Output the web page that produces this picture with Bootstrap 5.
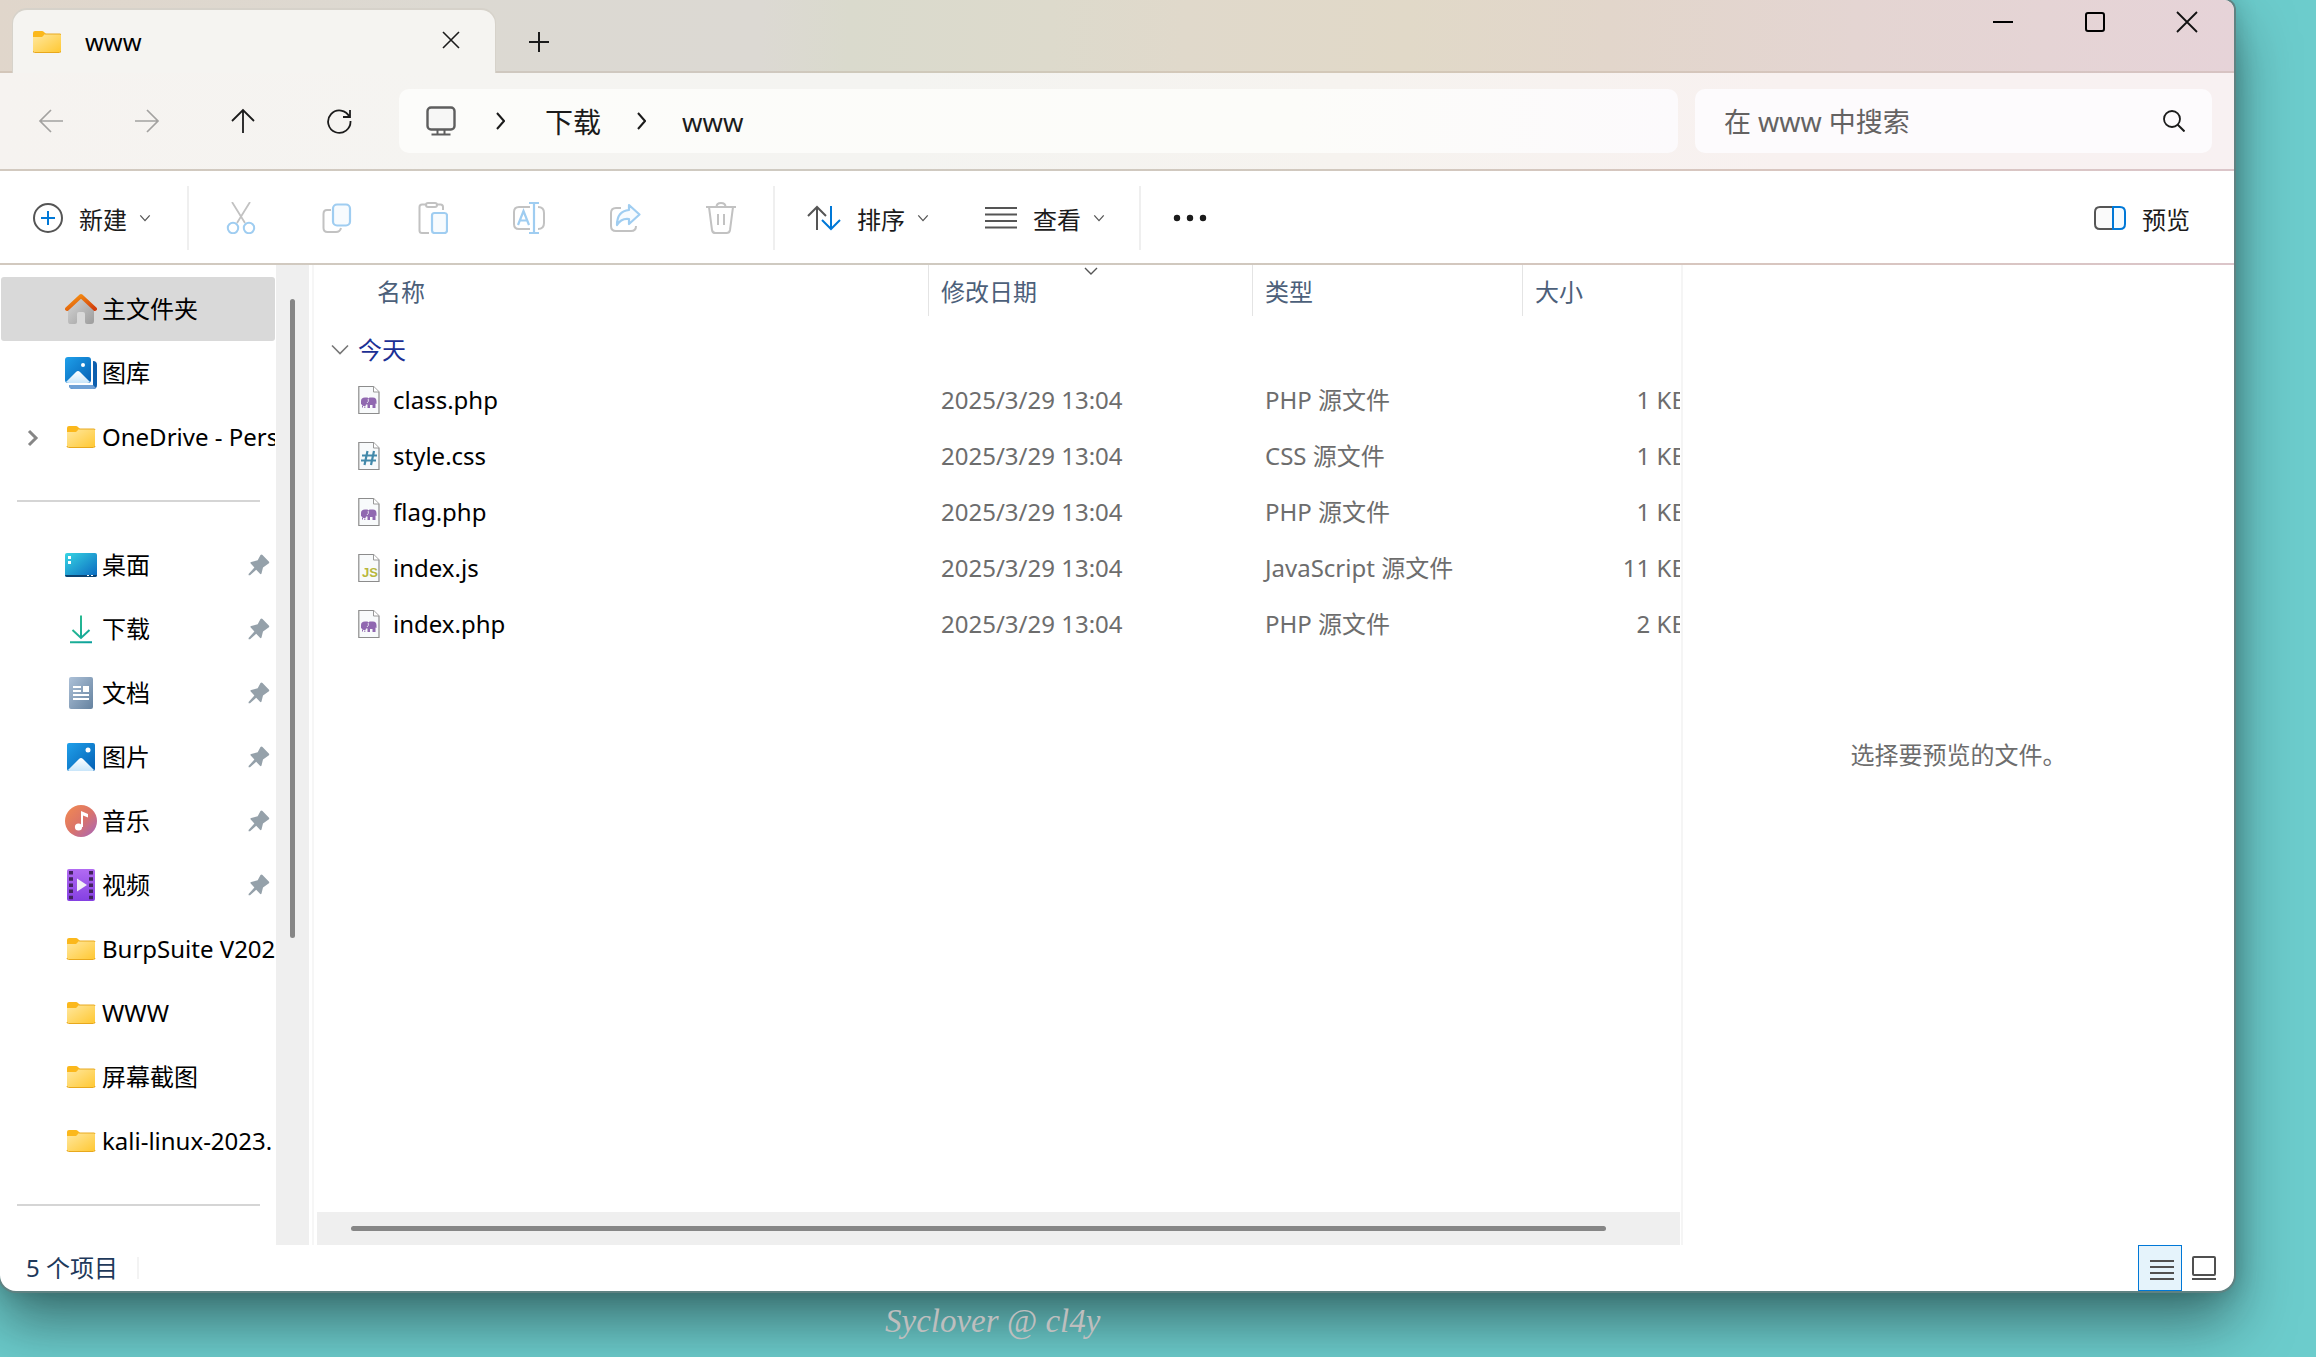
<!DOCTYPE html>
<html lang="zh-CN">
<head>
<meta charset="utf-8">
<meta name="viewport" content="width=device-width, initial-scale=1">
<title>www</title>
<link rel="stylesheet" href="https://cdn.jsdelivr.net/npm/bootstrap@5.3.0/dist/css/bootstrap.min.css">
<style>
  :root { --ink: #1b1b1b; --edge: linear-gradient(90deg, #d2c9bf 0%, #cfcac1 35%, #d1c8be 60%, #d8c6bf 78%, #dbc5c9 100%); }
  body { font-family: "Noto Sans", "Noto Sans CJK SC", sans-serif; font-size: 24px; line-height: 32px; color: #000; background: #6ccccc; }
  svg { display: block; flex: none; fill: none; }
  button, .side-link { background: none; border: 0; padding: 0; color: inherit; text-decoration: none; }
  .desktop { min-height: 100vh; overflow: hidden; }
  .explorer { margin-right: 82px; background: #fff; border-radius: 0 10px 16px 16px; box-shadow: 0 0 0 2px #5f8282, 0 30px 58px rgba(10, 20, 20, .5), 0 0 22px rgba(10, 30, 30, .25); }
  .title-strip { height: 73px; border-radius: 0 10px 0 0; background: linear-gradient(92deg, #e0d6cb 0%, #dcd9d2 20%, #dcd9d3 34%, #dadacd 38%, #dddacc 47%, #e0d9cb 53%, #e1d9c8 63%, #e2d6cb 72%, #e4d5d2 83%, #e6d3d8 100%); box-shadow: inset 0 -2px rgba(165, 140, 125, .22); }
  .tab-active { width: 482px; height: 63px; margin: 10px 0 0 13px; padding: 0 34px 0 20px; background: #f5f4f1; border-radius: 14px 14px 0 0; box-shadow: 0 -1px 0 1px #d6d2ca; clip-path: inset(-2px -2px 0 -2px); }
  .tab-active button { padding-bottom: 4px; }
  .tab-add { width: 88px; height: 73px; padding-top: 10px; }
  .caption-set { margin-right: 1px; }
  .caption-btn { width: 92px; height: 44px; }
  .nav-strip { height: 96px; padding: 0 22px 0 3px; background: linear-gradient(90deg, #f6f3f0 0%, #f5f4f1 20%, #f4f4f1 40%, #f6f3ef 60%, #f8f1f0 80%, #f8f1f2 100%); }
  .edge-line { height: 2px; background: var(--edge); }
  .tool-btn { width: 96px; height: 64px; }
  .address-box, .search-box { height: 64px; border-radius: 10px; }
  .address-box { background: linear-gradient(90deg, #fcfcfa 0%, #fcfcf9 70%, #fcfafc 100%); margin-left: 12px; padding-left: 27px; }
  .crumb { font-size: 28px; padding-top: 2px; color: var(--ink); text-decoration: none; }
  .crumb-end { font-size: 26px; }
  .crumb-sep { margin: 0 36px; }
  .crumb-root { margin: 0 40px; }
  .search-box { width: 517px; margin-left: 17px; padding: 0 27px 0 29px; background: #fdfbfd; }
  .search-box input { border: 0; outline: 0; background: none; font-size: 27px; color: #5f5e5e; padding: 2px 0 0; }
  .search-box input::placeholder { color: #646262; opacity: 1; }
  .command-bar { height: 92px; padding: 2px 44px 0 33px; color: var(--ink); }
  .bar-label { margin: 0 12px 0 16px; padding-top: 4px; }
  .bar-rule { width: 2px; height: 64px; background: #efefef; }
  .bar-rule-first { margin: 0 4px 0 36px; }
  .bar-rule-last { margin: 0 32px 0 34px; }
  .side-pane { width: 276px; padding-top: 12px; }
  .side-item { height: 64px; margin: 0 1px; padding: 0 5px 0 64px; overflow: hidden; white-space: nowrap; position: relative; }
  .side-item.chosen { background: #d9d9d9; border-radius: 3px; }
  .side-link { padding-left: 5px; }
  .side-expander { position: absolute; left: 26px; top: 24px; }
  .side-rule { height: 64px; padding: 31px 16px 0 17px; }
  .side-rule hr { margin: 0; border-top: 2px solid #d5d5d5; opacity: 1; }
  .v-track { width: 33px; background: #efefef; padding: 34px 14px 0; }
  .v-thumb { width: 5px; height: 67.5%; background: #868686; border-radius: 3px; }
  .h-track { height: 33px; background: #efefef; padding: 14px 74px 0 34px; }
  .h-thumb { height: 5px; background: #868686; border-radius: 3px; }
  .pane-gap { width: 8px; border-left: 3px solid #fff; box-shadow: inset 2px 0 #f6f6f6; }
  .list-pane { min-width: 0; overflow: hidden; }
  .file-table { width: calc(100% + 19px); table-layout: fixed; border-collapse: separate; border-spacing: 0; white-space: nowrap; }
  .col-date { width: 324px; }
  .col-kind { width: 270px; }
  .col-size { width: 176px; }
  .file-table thead th { height: 51px; padding: 3px 12px 0; font-weight: 400; color: #4c607a; border-right: 1px solid #e4e4e4; position: relative; }
  .file-table thead th:first-child { padding-left: 60px; }
  .file-table thead th:last-child { border-right: 0; }
  .sort-mark { position: absolute; left: 155px; top: 2px; }
  .group-row th { height: 56px; padding: 12px 0 0 14px; font-weight: 400; color: #1c3094; }
  .group-row svg { margin-right: 9px; }
  .file-row td { height: 56px; padding: 0 12px; color: #6d6d6d; }
  .file-row td:first-child { color: #000; padding-left: 41px; }
  .file-row td:last-child { text-align: right; }
  .file-name { padding-left: 13px; }
  .preview-pane { width: 553px; margin-left: 1px; border-left: 2px solid #f5f5f5; color: #6d6d6d; }
  .status-strip { height: 46px; padding: 0 8px 0 26px; color: #1e395b; }
  .status-rule { width: 2px; height: 22px; margin-left: 19px; background: #f3f3f3; }
  .view-btn { width: 44px; height: 46px; }
  .view-btn.pressed { background: #e5f3fb; border: 1px solid #0078d7; padding: 4px 0 0 4px; }
  .watermark { height: 66px; padding: 12px 0 0 885px; font: italic 33px/36px "Liberation Serif", serif; color: #bebebe; position: relative; }
</style>
<script src="https://cdn.jsdelivr.net/npm/bootstrap@5.3.0/dist/js/bootstrap.bundle.min.js"></script>
</head>
<body>
<svg width="0" height="0" class="position-absolute" aria-hidden="true">
  <defs>
    <linearGradient id="gFolder" x1="0" y1="0" x2="1" y2="1"><stop offset="0" stop-color="#ffe8a0"/><stop offset="1" stop-color="#ffc833"/></linearGradient>
    <linearGradient id="gRoof" x1="0" y1="0" x2="1" y2="1"><stop offset="0" stop-color="#f99a12"/><stop offset="1" stop-color="#d13c0c"/></linearGradient>
    <linearGradient id="gWall" x1="0" y1="0" x2="1" y2="1"><stop offset="0" stop-color="#d8d8d8"/><stop offset="1" stop-color="#9c9c9c"/></linearGradient>
    <linearGradient id="gBlue" x1="0" y1="0" x2="1" y2="1"><stop offset="0" stop-color="#1fa0ea"/><stop offset="1" stop-color="#0560b4"/></linearGradient>
    <linearGradient id="gSnow" x1="0" y1="0" x2="0" y2="1"><stop offset="0" stop-color="#fff"/><stop offset="1" stop-color="#c9e6fa"/></linearGradient>
    <linearGradient id="gDesk" x1="0" y1="0" x2="1" y2="1"><stop offset="0" stop-color="#37d5e3"/><stop offset="1" stop-color="#0a68c0"/></linearGradient>
    <linearGradient id="gDown" x1="0" y1="0" x2="1" y2="1"><stop offset="0" stop-color="#33c38c"/><stop offset="1" stop-color="#0a9f9d"/></linearGradient>
    <linearGradient id="gDoc" x1="0" y1="0" x2="1" y2="1"><stop offset="0" stop-color="#adc1d8"/><stop offset="1" stop-color="#65829f"/></linearGradient>
    <linearGradient id="gMusic" x1="0" y1="0" x2="1" y2="1"><stop offset="0" stop-color="#f38b50"/><stop offset=".5" stop-color="#db7468"/><stop offset="1" stop-color="#a665bd"/></linearGradient>
    <linearGradient id="gVideo" x1="0" y1="0" x2="0" y2="1"><stop offset="0" stop-color="#b26bf2"/><stop offset="1" stop-color="#8440e2"/></linearGradient>
    <symbol id="folder" viewBox="0 0 32 32"><path d="M2 7a2 2 0 0 1 2-2h7q1 0 2 1l2 2v6H2z" fill="#fbb81c"/><path d="M2 11h9l3-3h16v18H2z" fill="url(#gFolder)"/><path d="M14 8h15q1 0 1 1" stroke="#e8aa22"/><path d="M2 25q0 1.500 1.500 1.500h25q1.500 0 1.500-1.500" stroke="#e8a81c"/></symbol>
    <symbol id="home" viewBox="0 0 32 32"><path d="M3 16 16 4l13 12v12q0 3-3 3h-4q-2 0-2-2v-8q0-2-2-2h-4q-2 0-2 2v8q0 2-2 2H5q-2 0-2-3z" fill="url(#gWall)"/><path d="M2 16 16 3l14 13" stroke="url(#gRoof)" stroke-width="4" stroke-linecap="round" stroke-linejoin="round"/></symbol>
    <symbol id="gallery" viewBox="0 0 32 32"><path d="M28 4q4 0 4 4v20q0 4-4 4H8q-4 0-4-4h24z" fill="#0d5fae"/><path d="M4 28h24l3 3q-1 1-3 1H8q-4 0-4-4z" fill="#6fa1d6"/><rect x="-1" y="-1" width="29" height="29" fill="#fff"/><rect width="26" height="26" rx="3" fill="url(#gBlue)"/><path d="M1 25 11 15q2-2 4 0l10 10q-1 1-3 1H4q-2 0-3-1z" fill="url(#gSnow)"/><circle cx="18" cy="8" r="2" fill="#fff"/></symbol>
    <symbol id="desktop" viewBox="0 0 32 32"><rect y="4" width="32" height="24" rx="2" fill="url(#gDesk)"/><path d="M0 26h32q0 2-2 2H2q-2 0-2-2z" fill="#0b4371"/><path d="M3 7h3v3H3zm0 5h3v3H3zM22 26h2v1h-2zm4 0h2v1h-2z" fill="#fff"/></symbol>
    <symbol id="download" viewBox="0 0 32 32"><path d="M16 2.500v22M7.500 17l8.500 8 8.500-8M5 29.200h22" stroke="url(#gDown)" stroke-width="2"/></symbol>
    <symbol id="document" viewBox="0 0 32 32"><rect x="4" width="24" height="32" rx="2" fill="url(#gDoc)"/><path d="M8 10h8M8 14h8M8 18h16M8 22h16" stroke="#fff" stroke-width="2"/><path d="M18 9h6v6h-6z" fill="#fff"/></symbol>
    <symbol id="picture" viewBox="0 0 32 32"><rect x="2" y="2" width="28" height="28" rx="2" fill="url(#gBlue)"/><path d="M3 29 14 18q2-2 4 0l11 11-1 1H4z" fill="url(#gSnow)"/><circle cx="23" cy="9" r="2.500" fill="#fff"/></symbol>
    <symbol id="music" viewBox="0 0 32 32"><circle cx="16" cy="16" r="16" fill="url(#gMusic)"/><circle cx="13.500" cy="22" r="3.600" fill="#fff"/><path d="M16 22V6l7 3v3.500l-5-2V22z" fill="#fff"/></symbol>
    <symbol id="video" viewBox="0 0 32 32"><rect x="2" width="28" height="32" rx="2" fill="url(#gVideo)"/><path d="M6 2v30M26 2v30" stroke="#43235f" stroke-width="4" stroke-dasharray="3.500 2.700"/><path d="M12 9.500 22 16l-10 6.500z" fill="#f3f0f7"/></symbol>
    <symbol id="pin" viewBox="0 0 22 22"><path d="M12.500 1q1-1 2 0l6.300 6.500q1 1-.2 2l-5.600 4-1.500 6q-.5 1.300-1.500.3l-3.800-4L2 21.200H.6V20l5.800-6.500L2.700 9.500q-.8-1 .5-1.500l6.500-1.700z" fill="#95a1aa"/></symbol>
    <symbol id="chev" viewBox="0 0 14 10"><path d="m1.500 2 5.500 6 5.500-6" stroke="#555" stroke-width="1.500"/></symbol>
    <symbol id="page" viewBox="0 0 22 30"><path d="M.8 1.500h14.700L21 7v21.500H.8z" fill="#f8fafb" stroke="#8c8c8c" stroke-width="1.200"/><path d="M15.500 1.500V7H21" fill="#fff" stroke="#999"/></symbol>
    <symbol id="php" viewBox="0 0 22 30"><use href="#page"/><path d="M3 16q0-3.500 4-3.500h2.500l1 1 1-1H15q3.500 0 3.500 4v2.500l-1-.5V23h-3v-3h-2.500v3H9.500v-3.500H8L7.500 21h-2L3 19z" fill="#9068b0"/><path d="M4.500 20.500v2M6.800 21.500v1.500" stroke="#9068b0"/><path d="M10.200 14q1 2.500-1.200 4" stroke="#f8fafb" stroke-width=".8"/></symbol>
    <symbol id="css" viewBox="0 0 22 30"><use href="#page"/><path d="m9.500 10-3 14M16 10l-3 14M4 14.500h15M3 19.500h15" stroke="#4389aa" stroke-width="2.200"/></symbol>
    <symbol id="js" viewBox="0 0 22 30"><use href="#page"/><text x="4" y="24" font-family="Liberation Sans, sans-serif" font-size="13" font-weight="700" fill="#b7b73b">JS</text></symbol>
  </defs>
</svg>

<div class="desktop d-flex flex-column">
  <div class="explorer flex-grow-1 d-flex flex-column">
    <header>
      <div class="title-strip d-flex">
        <div class="tab-active d-flex align-items-center">
          <svg width="28" height="24" viewBox="2 4 28 24" preserveAspectRatio="none"><use href="#folder" width="32" height="32"/></svg>
          <span class="ms-4 flex-grow-1">www</span>
          <button type="button" aria-label="关闭标签页"><svg width="20" height="20" viewBox="0 0 20 20"><path d="m2 2 16 16M18 2 2 18" stroke="#1b1b1b" stroke-width="1.600"/></svg></button>
        </div>
        <button type="button" class="tab-add d-flex align-items-center justify-content-center" aria-label="新标签页"><svg width="22" height="22" viewBox="0 0 22 22"><path d="M11 1v20M1 11h20" stroke="#1b1b1b" stroke-width="2"/></svg></button>
        <div class="caption-set ms-auto d-flex">
          <button type="button" class="caption-btn d-flex align-items-center justify-content-center" aria-label="最小化"><svg width="20" height="20" viewBox="0 0 20 20"><path d="M0 10h20" stroke="#000" stroke-width="2"/></svg></button>
          <button type="button" class="caption-btn d-flex align-items-center justify-content-center" aria-label="最大化"><svg width="20" height="20" viewBox="0 0 20 20"><rect x="1" y="1" width="18" height="18" rx="2" stroke="#000" stroke-width="2"/></svg></button>
          <button type="button" class="caption-btn d-flex align-items-center justify-content-center" aria-label="关闭"><svg width="22" height="22" viewBox="0 0 22 22"><path d="m1 1 20 20M21 1 1 21" stroke="#111" stroke-width="1.800"/></svg></button>
        </div>
      </div>

      <div class="nav-strip d-flex align-items-center">
        <button type="button" class="tool-btn d-flex align-items-center justify-content-center" aria-label="后退"><svg width="26" height="26" viewBox="0 0 26 26"><path d="M25 13H2M13 2 2 13l11 11" stroke="#a3a2a0" stroke-width="1.700"/></svg></button>
        <button type="button" class="tool-btn d-flex align-items-center justify-content-center" aria-label="前进"><svg width="26" height="26" viewBox="0 0 26 26"><path d="M1 13h23M13 2l11 11-11 11" stroke="#a3a2a0" stroke-width="1.700"/></svg></button>
        <button type="button" class="tool-btn d-flex align-items-center justify-content-center" aria-label="向上"><svg width="26" height="26" viewBox="0 0 26 26"><path d="M13 25V2M2 13 13 2l11 11" stroke="#1b1b1b" stroke-width="1.800"/></svg></button>
        <button type="button" class="tool-btn d-flex align-items-center justify-content-center" aria-label="刷新"><svg width="26" height="26" viewBox="0 0 26 26"><path d="M24 2v7h-7M23.500 9A11.200 11.200 0 1 0 24.500 13" stroke="#1b1b1b" stroke-width="1.800"/></svg></button>
        <nav class="address-box flex-grow-1 d-flex align-items-center" aria-label="路径">
          <svg width="30" height="30" viewBox="0 0 30 30"><rect x="1.500" y="1.500" width="27" height="22" rx="3.500" fill="#f7f7f6" stroke="#5e5e5e" stroke-width="2.400"/><path d="M11.500 24v4M18.500 24v4M5.500 28.500h19" stroke="#5e5e5e" stroke-width="2"/></svg>
          <svg class="crumb-root" width="9" height="18" viewBox="0 0 9 18"><path d="m1 1 7 8-7 8" stroke="#1b1b1b" stroke-width="2"/></svg>
          <a href="#" class="crumb">下载</a>
          <svg class="crumb-sep" width="9" height="18" viewBox="0 0 9 18"><path d="m1 1 7 8-7 8" stroke="#1b1b1b" stroke-width="2"/></svg>
          <a href="#" class="crumb crumb-end">www</a>
        </nav>
        <form class="search-box d-flex align-items-center" role="search">
          <label for="q" class="visually-hidden">搜索</label>
          <input id="q" type="text" class="flex-grow-1" placeholder="在 www 中搜索">
          <svg width="22" height="22" viewBox="0 0 22 22"><circle cx="9" cy="9" r="8" stroke="#1b1b1b" stroke-width="1.800"/><path d="m14.500 14.500 7 7" stroke="#1b1b1b" stroke-width="2"/></svg>
        </form>
      </div>
      <div class="edge-line"></div>

      <div class="command-bar d-flex align-items-center bg-white">
        <button type="button" class="d-flex align-items-center text-nowrap"><svg width="30" height="30" viewBox="0 0 30 30"><circle cx="15" cy="15" r="14" stroke="#555" stroke-width="2"/><path d="M15 8v14M8 15h14" stroke="#0078d7" stroke-width="2"/></svg><span class="bar-label">新建</span><svg width="12" height="10"><use href="#chev"/></svg></button>
        <div class="bar-rule bar-rule-first"></div>
        <button type="button" class="tool-btn d-flex align-items-center justify-content-center" aria-label="剪切"><svg width="30" height="32" viewBox="0 0 30 32"><path d="M6 0 19 21M24 0 11 21" stroke="#c2c2c2" stroke-width="1.800"/><circle cx="7" cy="26" r="5.200" stroke="#9fcdf1" stroke-width="2"/><circle cx="23" cy="26" r="5.200" stroke="#9fcdf1" stroke-width="2"/></svg></button>
        <button type="button" class="tool-btn d-flex align-items-center justify-content-center" aria-label="复制"><svg width="30" height="30" viewBox="0 0 30 30"><path d="M9 7H5Q1.500 7 1.500 11v14q0 4 4 4H14q4 0 5-4" stroke="#c2c2c2" stroke-width="2"/><rect x="11" y="1.500" width="17" height="21" rx="4" fill="#f7fbfe" stroke="#9fcdf1" stroke-width="2.200"/></svg></button>
        <button type="button" class="tool-btn d-flex align-items-center justify-content-center" aria-label="粘贴"><svg width="30" height="32" viewBox="0 0 30 32"><path d="M8 2.500H4q-2.500 0-2.500 2.500v23.500Q1.500 31 4 31h7M19 2.500h3.500Q25 2.500 25 5v3" stroke="#c2c2c2" stroke-width="2"/><rect x="8" y="1" width="11" height="4" rx="2" stroke="#c2c2c2" stroke-width="2"/><rect x="14" y="11" width="15" height="20" rx="2.500" fill="#f7fbfe" stroke="#9fcdf1" stroke-width="2.200"/></svg></button>
        <button type="button" class="tool-btn d-flex align-items-center justify-content-center" aria-label="重命名"><svg width="34" height="32" viewBox="0 0 34 32"><path d="M18 5H7Q2 5 2 10v12q0 5 5 5h11M26 5q6 0 6 6v10q0 6-6 6" stroke="#c2c2c2" stroke-width="2"/><path d="m6 23 5.500-14L17 23M8 18.500h7M22 1v30M17 1h10M17 31h10" stroke="#9fcdf1" stroke-width="2.200"/></svg></button>
        <button type="button" class="tool-btn d-flex align-items-center justify-content-center" aria-label="共享"><svg width="32" height="30" viewBox="0 0 32 30"><path d="M12 5H7Q2 5 2 10v13q0 5 5 5h15q5 0 5-5" stroke="#c2c2c2" stroke-width="2"/><path d="M20 2l10.500 9.500L20 21v-5q-8-1-12 6Q8 8 20 7z" fill="#f7fbfe" stroke="#9fcdf1" stroke-width="2.200" stroke-linejoin="round"/></svg></button>
        <button type="button" class="tool-btn d-flex align-items-center justify-content-center" aria-label="删除"><svg width="30" height="32" viewBox="0 0 30 32"><path d="M0 5h30M3 5l3 23q.4 3 3.500 3h11q3 0 3.500-3l3-23M10.500 5q0-4 4.500-4t4.500 4M12 12v11M18 12v11" stroke="#c2c2c2" stroke-width="2"/></svg></button>
        <div class="bar-rule ms-1"></div>
        <button type="button" class="d-flex align-items-center text-nowrap ms-4 ps-2"><svg width="34" height="26" viewBox="0 0 34 26"><path d="M10 25V2M1 11l9-9 9 9" stroke="#555" stroke-width="2"/><path d="M24 1v23M15 15l9 9 9-9" stroke="#0078d7" stroke-width="2"/></svg><span class="bar-label">排序</span><svg width="12" height="10"><use href="#chev"/></svg></button>
        <button type="button" class="d-flex align-items-center text-nowrap ms-5 ps-2"><svg width="32" height="22" viewBox="0 0 32 22"><path d="M0 1h32M0 7.500h32M0 14h32M0 20.500h32" stroke="#555" stroke-width="2"/></svg><span class="bar-label">查看</span><svg width="12" height="10"><use href="#chev"/></svg></button>
        <div class="bar-rule bar-rule-last"></div>
        <button type="button" aria-label="更多"><svg width="34" height="8" viewBox="0 0 34 8"><path d="M.8 4a3.200 3.200 0 1 0 6.400 0 3.200 3.200 0 1 0-6.400 0m13 0a3.200 3.200 0 1 0 6.400 0 3.200 3.200 0 1 0-6.400 0m13 0a3.200 3.200 0 1 0 6.400 0 3.200 3.200 0 1 0-6.400 0" fill="#1b1b1b"/></svg></button>
        <button type="button" class="d-flex align-items-center text-nowrap ms-auto"><svg width="32" height="24" viewBox="0 0 32 24"><path d="M19 1H6Q1 1 1 6v12q0 5 5 5h13" fill="#fafafa" stroke="#555" stroke-width="2"/><path d="M19 1v22h7q5 0 5-5V6q0-5-5-5z" fill="#f5fbff" stroke="#0078d7" stroke-width="2"/></svg><span class="bar-label me-0">预览</span></button>
      </div>
      <div class="edge-line"></div>
    </header>

    <div class="flex-grow-1 d-flex">
      <nav class="side-pane flex-shrink-0" aria-label="导航窗格">
        <div class="side-item chosen d-flex align-items-center"><svg width="32" height="32"><use href="#home"/></svg><a href="#" class="side-link">主文件夹</a></div>
        <div class="side-item d-flex align-items-center"><svg width="32" height="32"><use href="#gallery"/></svg><a href="#" class="side-link">图库</a></div>
        <div class="side-item d-flex align-items-center"><svg class="side-expander" width="12" height="18" viewBox="0 0 12 18"><path d="m2 2 7 7-7 7" stroke="#868686" stroke-width="3"/></svg><svg width="32" height="32"><use href="#folder"/></svg><a href="#" class="side-link">OneDrive - Pers</a></div>
        <div class="side-rule"><hr></div>
        <div class="side-item d-flex align-items-center"><svg width="32" height="32"><use href="#desktop"/></svg><a href="#" class="side-link">桌面</a><svg class="ms-auto" width="22" height="22"><use href="#pin"/></svg></div>
        <div class="side-item d-flex align-items-center"><svg width="32" height="32"><use href="#download"/></svg><a href="#" class="side-link">下载</a><svg class="ms-auto" width="22" height="22"><use href="#pin"/></svg></div>
        <div class="side-item d-flex align-items-center"><svg width="32" height="32"><use href="#document"/></svg><a href="#" class="side-link">文档</a><svg class="ms-auto" width="22" height="22"><use href="#pin"/></svg></div>
        <div class="side-item d-flex align-items-center"><svg width="32" height="32"><use href="#picture"/></svg><a href="#" class="side-link">图片</a><svg class="ms-auto" width="22" height="22"><use href="#pin"/></svg></div>
        <div class="side-item d-flex align-items-center"><svg width="32" height="32"><use href="#music"/></svg><a href="#" class="side-link">音乐</a><svg class="ms-auto" width="22" height="22"><use href="#pin"/></svg></div>
        <div class="side-item d-flex align-items-center"><svg width="32" height="32"><use href="#video"/></svg><a href="#" class="side-link">视频</a><svg class="ms-auto" width="22" height="22"><use href="#pin"/></svg></div>
        <div class="side-item d-flex align-items-center"><svg width="32" height="32"><use href="#folder"/></svg><a href="#" class="side-link">BurpSuite V202</a></div>
        <div class="side-item d-flex align-items-center"><svg width="32" height="32"><use href="#folder"/></svg><a href="#" class="side-link">WWW</a></div>
        <div class="side-item d-flex align-items-center"><svg width="32" height="32"><use href="#folder"/></svg><a href="#" class="side-link">屏幕截图</a></div>
        <div class="side-item d-flex align-items-center"><svg width="32" height="32"><use href="#folder"/></svg><a href="#" class="side-link">kali-linux-2023.</a></div>
        <div class="side-rule"><hr></div>
      </nav>
      <div class="v-track flex-shrink-0"><div class="v-thumb"></div></div>
      <div class="pane-gap flex-shrink-0"></div>

      <main class="list-pane flex-grow-1 d-flex flex-column">
        <table class="file-table">
          <colgroup><col><col class="col-date"><col class="col-kind"><col class="col-size"></colgroup>
          <thead>
            <tr><th scope="col">名称</th><th scope="col">修改日期<svg class="sort-mark" width="14" height="9" viewBox="0 0 14 9"><path d="m1 1 6 6 6-6" stroke="#555" stroke-width="1.400"/></svg></th><th scope="col">类型</th><th scope="col">大小</th></tr>
          </thead>
          <tbody>
            <tr class="group-row"><th colspan="4" scope="rowgroup"><span class="d-flex align-items-center"><svg width="18" height="12" viewBox="0 0 18 12"><path d="m1 1.500 8 8 8-8" stroke="#777" stroke-width="1.600"/></svg><span>今天</span></span></th></tr>
            <tr class="file-row"><td><span class="d-flex align-items-center"><svg width="22" height="30"><use href="#php"/></svg><span class="file-name">class.php</span></span></td><td>2025/3/29 13:04</td><td>PHP 源文件</td><td>1 KB</td></tr>
            <tr class="file-row"><td><span class="d-flex align-items-center"><svg width="22" height="30"><use href="#css"/></svg><span class="file-name">style.css</span></span></td><td>2025/3/29 13:04</td><td>CSS 源文件</td><td>1 KB</td></tr>
            <tr class="file-row"><td><span class="d-flex align-items-center"><svg width="22" height="30"><use href="#php"/></svg><span class="file-name">flag.php</span></span></td><td>2025/3/29 13:04</td><td>PHP 源文件</td><td>1 KB</td></tr>
            <tr class="file-row"><td><span class="d-flex align-items-center"><svg width="22" height="30"><use href="#js"/></svg><span class="file-name">index.js</span></span></td><td>2025/3/29 13:04</td><td>JavaScript 源文件</td><td>11 KB</td></tr>
            <tr class="file-row"><td><span class="d-flex align-items-center"><svg width="22" height="30"><use href="#php"/></svg><span class="file-name">index.php</span></span></td><td>2025/3/29 13:04</td><td>PHP 源文件</td><td>2 KB</td></tr>
          </tbody>
        </table>
        <div class="h-track mt-auto"><div class="h-thumb"></div></div>
      </main>

      <aside class="preview-pane flex-shrink-0 d-flex align-items-center justify-content-center">选择要预览的文件。</aside>
    </div>

    <footer class="status-strip d-flex align-items-center">
      <span>5 个项目</span>
      <span class="status-rule"></span>
      <button type="button" class="view-btn pressed ms-auto d-flex align-items-center justify-content-center" aria-label="详细信息"><svg width="24" height="20" viewBox="0 0 24 20"><path d="M0 1h24M0 7h24M0 13h24M0 19h24" stroke="#505050" stroke-width="2"/></svg></button>
      <button type="button" class="view-btn d-flex align-items-center justify-content-center" aria-label="大图标"><svg width="24" height="24" viewBox="0 0 24 24"><rect x="1" y="1" width="22" height="18" rx="1" stroke="#505050" stroke-width="2"/><path d="M0 23h24" stroke="#505050" stroke-width="2"/></svg></button>
    </footer>
  </div>
  <div class="watermark">Syclover @ cl4y</div>
</div>
</body>
</html>
